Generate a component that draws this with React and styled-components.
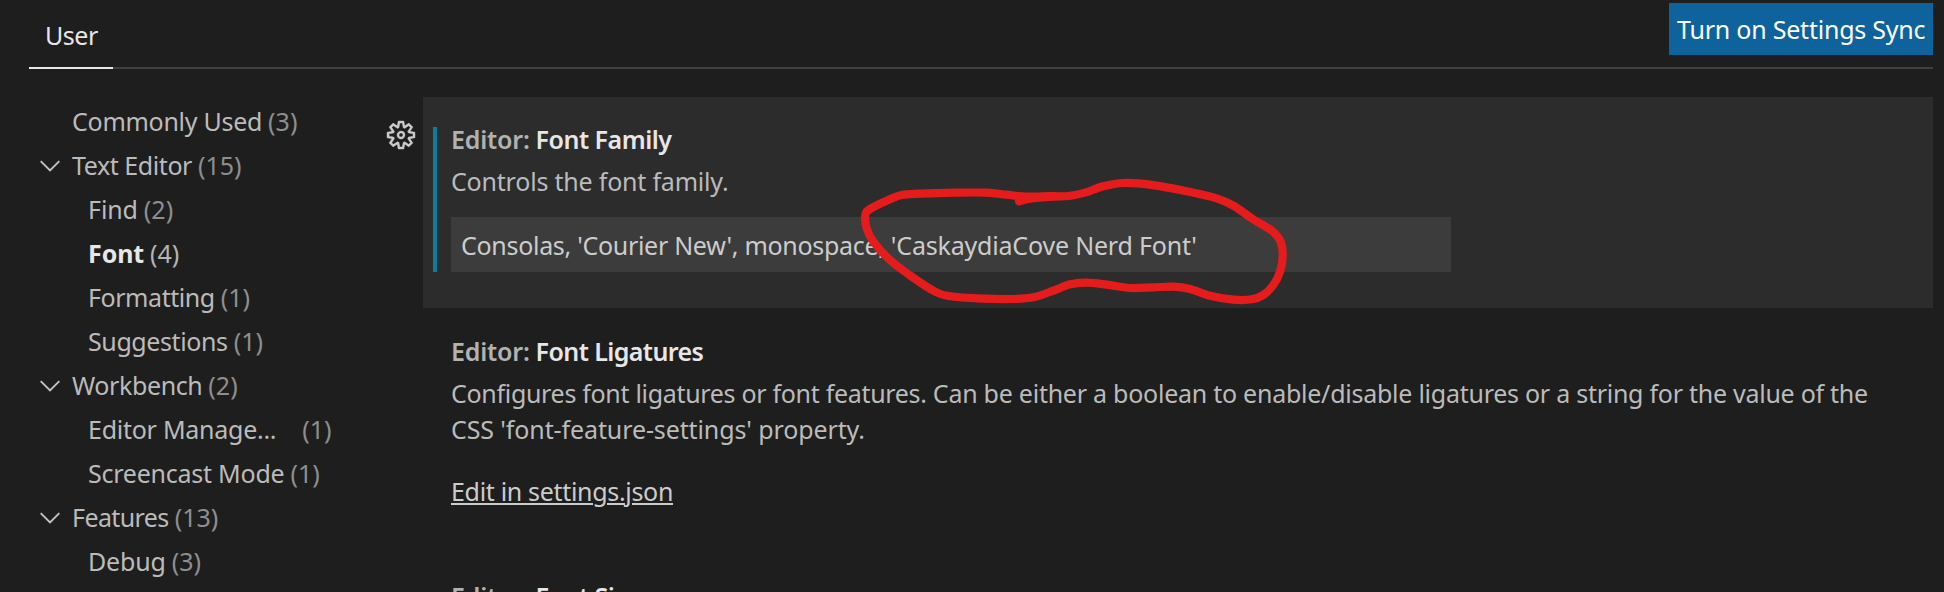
import React from 'react';
import styled, { createGlobalStyle } from 'styled-components';
import { VscSettingsGear } from 'react-icons/vsc';

const GlobalStyle = createGlobalStyle`
  * { box-sizing: border-box; }
  body {
    margin: 0;
    background: #1e1e1e;
    overflow: hidden;
    font-family: "Noto Sans", "Open Sans", sans-serif;
    font-size: 25px;
    color: #bbbbbb;
  }
`;

const Page = styled.div`
  width: 1944px;
  height: 592px;
  padding: 0 11px 0 29px;
  overflow: hidden;
  display: flex;
  flex-direction: column;
`;

const Text = styled.span`
  letter-spacing: ${(p) => p.$ls || 0}px;
  margin-left: ${(p) => p.$gap || 0}px;
  white-space: pre;
`;

const Header = styled.header`
  height: 69px;
  flex: none;
  display: flex;
  justify-content: space-between;
  align-items: flex-start;
  border-bottom: 2px solid #404040;
`;

const Tab = styled.div`
  width: 84px;
  height: 69px;
  padding-left: 16px;
  line-height: 70px;
  color: #e7e7e7;
  border-bottom: 2px solid #e7e7e7;
`;

const SyncButton = styled.button`
  width: 264px;
  height: 52px;
  margin-top: 3px;
  padding: 0 0 0 8px;
  border: 0;
  background: #0e639c;
  color: #ffffff;
  font: inherit;
  line-height: 52px;
  text-align: left;
`;

const Body = styled.div`
  flex: 1;
  display: flex;
  min-height: 0;
`;

const Tree = styled.nav`
  width: 351px;
  flex: none;
  padding-top: 30px;
`;

const TreeRow = styled.div`
  height: 44px;
  line-height: 44px;
  display: flex;
  padding-left: ${(p) => (p.$child ? 59 : 11)}px;
  color: ${(p) => (p.$active ? '#e7e7e7' : '#bbbbbb')};
  font-weight: ${(p) => (p.$active ? 700 : 400)};
`;

const Twistie = styled.span`
  width: 32px;
  flex: none;
  display: flex;
  padding-top: 17px;
`;

const Count = styled.span`
  margin-left: ${(p) => p.$gap}px;
  color: ${(p) => (p.$active ? '#b4b4b4' : '#8e8e8e')};
  font-weight: 400;
`;

const Settings = styled.main`
  flex: 1;
  padding-top: 28px;
`;

const SettingRow = styled.section`
  height: ${(p) => p.$height}px;
  display: flex;
`;

const Gutter = styled.div`
  width: 43px;
  flex: none;
  padding: 24px 0 0 7px;
  color: #cccccc;
  svg {
    display: block;
    overflow: visible;
    stroke-width: 0.35px;
  }
`;

const Panel = styled.div`
  flex: 1;
  padding: ${(p) => (p.$modified ? '24px 0 0 10px' : '25px 0 0 28px')};
  background: ${(p) => (p.$focused ? '#2c2c2c' : 'transparent')};
  display: flex;
`;

const Modified = styled.div`
  width: 4px;
  height: 145px;
  margin: 6px 14px 0 0;
  background: #0c7d9d;
`;

const Contents = styled.div`
  flex: 1;
`;

const Title = styled.h3`
  margin: 0;
  height: 42px;
  font-size: 25px;
  font-weight: 600;
  line-height: 36px;
  color: #e7e7e7;
`;

const Category = styled(Text)`
  color: #b2b2b2;
`;

const Description = styled.div`
  line-height: 36px;
  color: #bbbbbb;
`;

const TextInput = styled.div`
  width: 1000px;
  height: 55px;
  margin-top: 18px;
  padding-left: 10px;
  line-height: 57px;
  background: #3c3c3c;
  color: #cccccc;
`;

const EditLink = styled.a`
  display: block;
  margin-top: 26px;
  line-height: 36px;
  color: #cccccc;
  text-decoration: underline;
  text-decoration-thickness: 2px;
  text-underline-offset: 2px;
`;

const Marker = styled.svg`
  position: absolute;
  left: 840px;
  top: 160px;
  pointer-events: none;
`;

const tree = [
  { label: 'Commonly Used', ls: -0.275, count: '(3)' },
  { label: 'Text Editor', ls: -0.43, count: '(15)', open: true },
  { label: 'Find', ls: -0.1, count: '(2)', child: true },
  { label: 'Font', ls: -0.1, count: '(4)', child: true, active: true },
  { label: 'Formatting', ls: -0.44, count: '(1)', child: true },
  { label: 'Suggestions', ls: -0.4, count: '(1)', child: true },
  { label: 'Workbench', ls: -0.397, count: '(2)', open: true },
  { label: 'Editor Manage...', ls: -0.26, count: '(1)', child: true, gap: 26 },
  { label: 'Screencast Mode', ls: -0.24, count: '(1)', child: true },
  { label: 'Features', ls: -0.6, count: '(13)', open: true },
  { label: 'Debug', ls: -0.15, count: '(3)', child: true },
];

const stroke = [
  [537, 124], [570, 116], [640, 110], [685, 108], [735, 98], [790, 79], [850, 69], [930, 74],
  [1040, 94], [1130, 115], [1180, 137], [1240, 178], [1295, 212], [1322, 245], [1328, 290],
  [1320, 335], [1300, 375], [1270, 405], [1235, 418], [1180, 419], [1110, 407], [1050, 387],
  [1000, 380], [940, 382], [870, 384], [800, 374], [740, 368], [690, 373], [640, 392],
  [580, 412], [520, 417], [430, 416], [325, 408], [280, 392], [210, 346], [150, 300],
  [100, 245], [80, 205], [76, 165], [90, 147], [140, 122], [185, 105], [240, 101],
  [350, 98], [440, 98], [500, 104], [560, 110], [645, 108],
];

/* Catmull-Rom spline through the points, written as cubic Béziers. */
function smooth(points) {
  let d = `M${points[0]}`;
  for (let i = 0; i < points.length - 1; i += 1) {
    const a = points[Math.max(i - 1, 0)];
    const b = points[i];
    const c = points[i + 1];
    const e = points[Math.min(i + 2, points.length - 1)];
    d += `C${b[0] + (c[0] - a[0]) / 6},${b[1] + (c[1] - a[1]) / 6} ${c[0] - (e[0] - b[0]) / 6},${c[1] - (e[1] - b[1]) / 6} ${c}`;
  }
  return d;
}

function Chevron() {
  return (
    <svg width="20" height="12" viewBox="0 0 20 12" fill="none" stroke="#c5c5c5" strokeWidth="1.9">
      <path d="M0.7 1.2L10 10.5L19.3 1.2" />
    </svg>
  );
}

export default function App() {
  return (
    <>
      <GlobalStyle />
      <Page>
        <Header>
          <Tab><Text $ls={-0.45}>User</Text></Tab>
          <SyncButton><Text $ls={-0.22}>Turn on Settings Sync</Text></SyncButton>
        </Header>
        <Body>
          <Tree>
            {tree.map((item) => (
              <TreeRow key={item.label} $child={item.child} $active={item.active}>
                {!item.child && <Twistie>{item.open && <Chevron />}</Twistie>}
                <Text $ls={item.ls}>{item.label}</Text>
                <Count $gap={item.gap || 6} $active={item.active}>{item.count}</Count>
              </TreeRow>
            ))}
          </Tree>
          <Settings>
            <SettingRow $height={211}>
              <Gutter><VscSettingsGear size={28} /></Gutter>
              <Panel $focused $modified>
                <Modified />
                <Contents>
                  <Title>
                    <Category $ls={-0.2}>Editor:</Category>
                    <Text $ls={-0.5} $gap={6}>Font Family</Text>
                  </Title>
                  <Description><Text $ls={-0.2}>Controls the font family.</Text></Description>
                  <TextInput>
                    <Text $ls={-0.3}>Consolas, 'Courier New', monospace, </Text>
                    <Text $ls={-0.19}>'CaskaydiaCove Nerd Font'</Text>
                  </TextInput>
                </Contents>
              </Panel>
            </SettingRow>
            <SettingRow $height={245}>
              <Gutter />
              <Panel>
                <Contents>
                  <Title>
                    <Category $ls={-0.2}>Editor:</Category>
                    <Text $ls={-0.58} $gap={6}>Font Ligatures</Text>
                  </Title>
                  <Description>
                    <Text $ls={-0.31}>Configures font ligatures or font features. </Text>
                    <Text $ls={-0.25}>Can be either a boolean to enable/disable </Text>
                    <Text $ls={-0.26}>ligatures or a string for the value of the</Text>
                  </Description>
                  <Description><Text $ls={-0.11}>CSS 'font-feature-settings' property.</Text></Description>
                  <EditLink><Text $ls={-0.32}>Edit in settings.json</Text></EditLink>
                </Contents>
              </Panel>
            </SettingRow>
            <SettingRow $height={211}>
              <Gutter />
              <Panel>
                <Contents>
                  <Title>
                    <Category $ls={-0.2}>Editor:</Category>
                    <Text $ls={-0.5} $gap={6}>Font Size</Text>
                  </Title>
                </Contents>
              </Panel>
            </SettingRow>
          </Settings>
        </Body>
      </Page>
      <Marker width="480" height="160" viewBox="0 0 1440 480" fill="none" stroke="#e61c1c" strokeWidth="24.5" strokeLinecap="round" strokeLinejoin="round">
        <path d={smooth(stroke)} />
      </Marker>
    </>
  );
}
